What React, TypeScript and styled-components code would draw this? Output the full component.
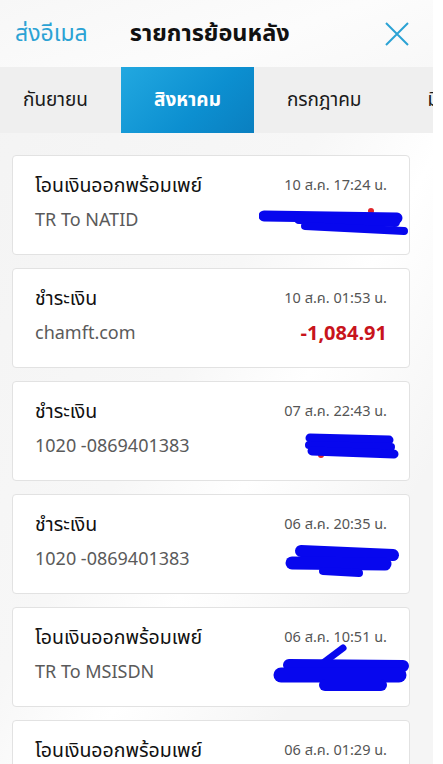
import { FC } from 'react';
import styled, { createGlobalStyle } from 'styled-components';

const GlobalStyle = createGlobalStyle`
  html, body {
    margin: 0;
    padding: 0;
    background: #ffffff;
  }
  body {
    font-family: 'Noto Sans Thai', 'Noto Sans', 'Liberation Sans', sans-serif;
    -webkit-font-smoothing: antialiased;
  }
`;

interface Scribble {
  lines: { x1: number; y1: number; x2: number; y2: number; w: number }[];
  speck?: { x: number; y: number };
}

interface Transaction {
  title: string;
  detail: string;
  date: string;
  amount?: string;
  scribble?: Scribble;
}

const transactions: Transaction[] = [
  {
    title: 'โอนเงินออกพร้อมเพย์',
    detail: 'TR To NATID',
    date: '10 ส.ค. 17:24 น.',
    scribble: {
      speck: { x: 112, y: 20 },
      lines: [
        { x1: 5, y1: 25, x2: 138, y2: 27, w: 11 },
        { x1: 40, y1: 28, x2: 136, y2: 31, w: 10 },
        { x1: 46, y1: 35, x2: 145, y2: 40, w: 8 },
      ],
    },
  },
  {
    title: 'ชำระเงิน',
    detail: 'chamft.com',
    date: '10 ส.ค. 01:53 น.',
    amount: '-1,084.91',
  },
  {
    title: 'ชำระเงิน',
    detail: '1020 -0869401383',
    date: '07 ส.ค. 22:43 น.',
    scribble: {
      speck: { x: 62, y: 38 },
      lines: [
        { x1: 51, y1: 21, x2: 130, y2: 23, w: 9 },
        { x1: 50, y1: 28, x2: 132, y2: 30, w: 8 },
        { x1: 53, y1: 34, x2: 135, y2: 37, w: 9 },
      ],
    },
  },
  {
    title: 'ชำระเงิน',
    detail: '1020 -0869401383',
    date: '06 ส.ค. 20:35 น.',
    scribble: {
      lines: [
        { x1: 42, y1: 21, x2: 134, y2: 25, w: 12 },
        { x1: 33, y1: 33, x2: 126, y2: 34, w: 13 },
        { x1: 64, y1: 41, x2: 100, y2: 43, w: 8 },
      ],
    },
  },
  {
    title: 'โอนเงินออกพร้อมเพย์',
    detail: 'TR To MSISDN',
    date: '06 ส.ค. 10:51 น.',
    scribble: {
      lines: [
        { x1: 64, y1: 20, x2: 84, y2: 5, w: 7 },
        { x1: 30, y1: 22, x2: 144, y2: 23, w: 12 },
        { x1: 22, y1: 32, x2: 140, y2: 32, w: 15 },
        { x1: 66, y1: 42, x2: 122, y2: 42, w: 12 },
      ],
    },
  },
  {
    title: 'โอนเงินออกพร้อมเพย์',
    detail: 'TR To MSISDN',
    date: '06 ส.ค. 01:29 น.',
  },
];

const months = ['กันยายน', 'สิงหาคม', 'กรกฎาคม', 'มิถุนายน'];

const CloseIcon: FC = () => (
  <svg width="26" height="26" viewBox="0 0 26 26">
    <path d="M2 2 L24 24 M24 2 L2 24" stroke="#2ba2d4" strokeWidth="2" fill="none" />
  </svg>
);

const Redaction: FC<{ scribble: Scribble }> = ({ scribble }) => (
  <RedactionSvg width="150" height="60" viewBox="0 0 150 60">
    {scribble.speck && (
      <circle cx={scribble.speck.x} cy={scribble.speck.y} r="3" fill="#e0262a" />
    )}
    {scribble.lines.map((l, i) => (
      <line
        key={i}
        x1={l.x1}
        y1={l.y1}
        x2={l.x2}
        y2={l.y2}
        stroke="#0707ee"
        strokeWidth={l.w}
        strokeLinecap="round"
      />
    ))}
  </RedactionSvg>
);

const App: FC = () => {
  return (
    <>
      <GlobalStyle />
      <Screen>
        <Header>
          <EmailLink>ส่งอีเมล</EmailLink>
          <Title>รายการย้อนหลัง</Title>
          <CloseButton>
            <CloseIcon />
          </CloseButton>
        </Header>
        <TabBar>
          <TabStrip>
            {months.map((m, i) => (
              <Tab key={m} $active={i === 1}>
                {m}
              </Tab>
            ))}
          </TabStrip>
        </TabBar>
        <List>
          {transactions.map((t, i) => (
            <Card key={i}>
              <Row>
                <CardTitle>{t.title}</CardTitle>
                <DateText>{t.date}</DateText>
              </Row>
              <Row>
                <Detail>{t.detail}</Detail>
                {t.amount && <Amount>{t.amount}</Amount>}
                {t.scribble && <Redaction scribble={t.scribble} />}
              </Row>
            </Card>
          ))}
        </List>
      </Screen>
    </>
  );
};

export default App;

const Screen = styled.div`
  width: 433px;
  height: 764px;
  overflow: hidden;
  display: flex;
  flex-direction: column;
  background: linear-gradient(120deg, #f3f3f3 0%, #f7f7f7 45%, #ffffff 60%, #f5f5f5 80%);
`;

const Header = styled.div`
  height: 67px;
  flex-shrink: 0;
  display: flex;
  align-items: center;
  padding: 0 23px 0 15px;
  background: linear-gradient(160deg, #f7f7f7 0%, #fcfcfc 60%, #f8f8f8 100%);
`;

const EmailLink = styled.span`
  font-size: 23px;
  color: #2ba2d4;
`;

const Title = styled.span`
  margin-left: 42px;
  font-size: 23.5px;
  font-weight: 700;
  color: #111111;
`;

const CloseButton = styled.span`
  margin-left: auto;
  display: flex;
`;

const TabBar = styled.div`
  height: 66px;
  flex-shrink: 0;
  background: #efefef;
  overflow: hidden;
`;

const TabStrip = styled.div`
  display: flex;
  height: 100%;
  margin-left: -10px;
`;

const Tab = styled.div<{ $active?: boolean }>`
  flex-shrink: 0;
  display: flex;
  align-items: center;
  padding: 0 33px;
  font-size: 19px;
  font-weight: ${({ $active }) => ($active ? 700 : 400)};
  color: ${({ $active }) => ($active ? '#ffffff' : '#1a1a1a')};
  background: ${({ $active }) =>
    $active ? 'linear-gradient(135deg, #22a8e0 0%, #0c8fd0 60%, #0a7fc0 100%)' : 'transparent'};
`;

const List = styled.div`
  display: flex;
  flex-direction: column;
  gap: 13px;
  padding: 22px 23px 0 12px;
`;

const Card = styled.div`
  flex-shrink: 0;
  height: 100px;
  box-sizing: border-box;
  display: flex;
  flex-direction: column;
  justify-content: center;
  gap: 11px;
  padding: 0 22px 4px;
  background: #ffffff;
  border: 1px solid #e2e2e2;
  border-radius: 4px;
`;

const Row = styled.div`
  display: flex;
  align-items: center;
  justify-content: space-between;
  height: 24px;
`;

const CardTitle = styled.span`
  font-size: 19.5px;
  color: #111111;
`;

const DateText = styled.span`
  font-size: 14.5px;
  color: #555555;
`;

const Detail = styled.span`
  font-size: 18px;
  color: #5a5a5a;
`;

const Amount = styled.span`
  font-size: 20px;
  font-weight: 700;
  color: #c8141c;
`;

const RedactionSvg = styled.svg`
  flex-shrink: 0;
  margin: -18px -22px -18px 0;
`;
